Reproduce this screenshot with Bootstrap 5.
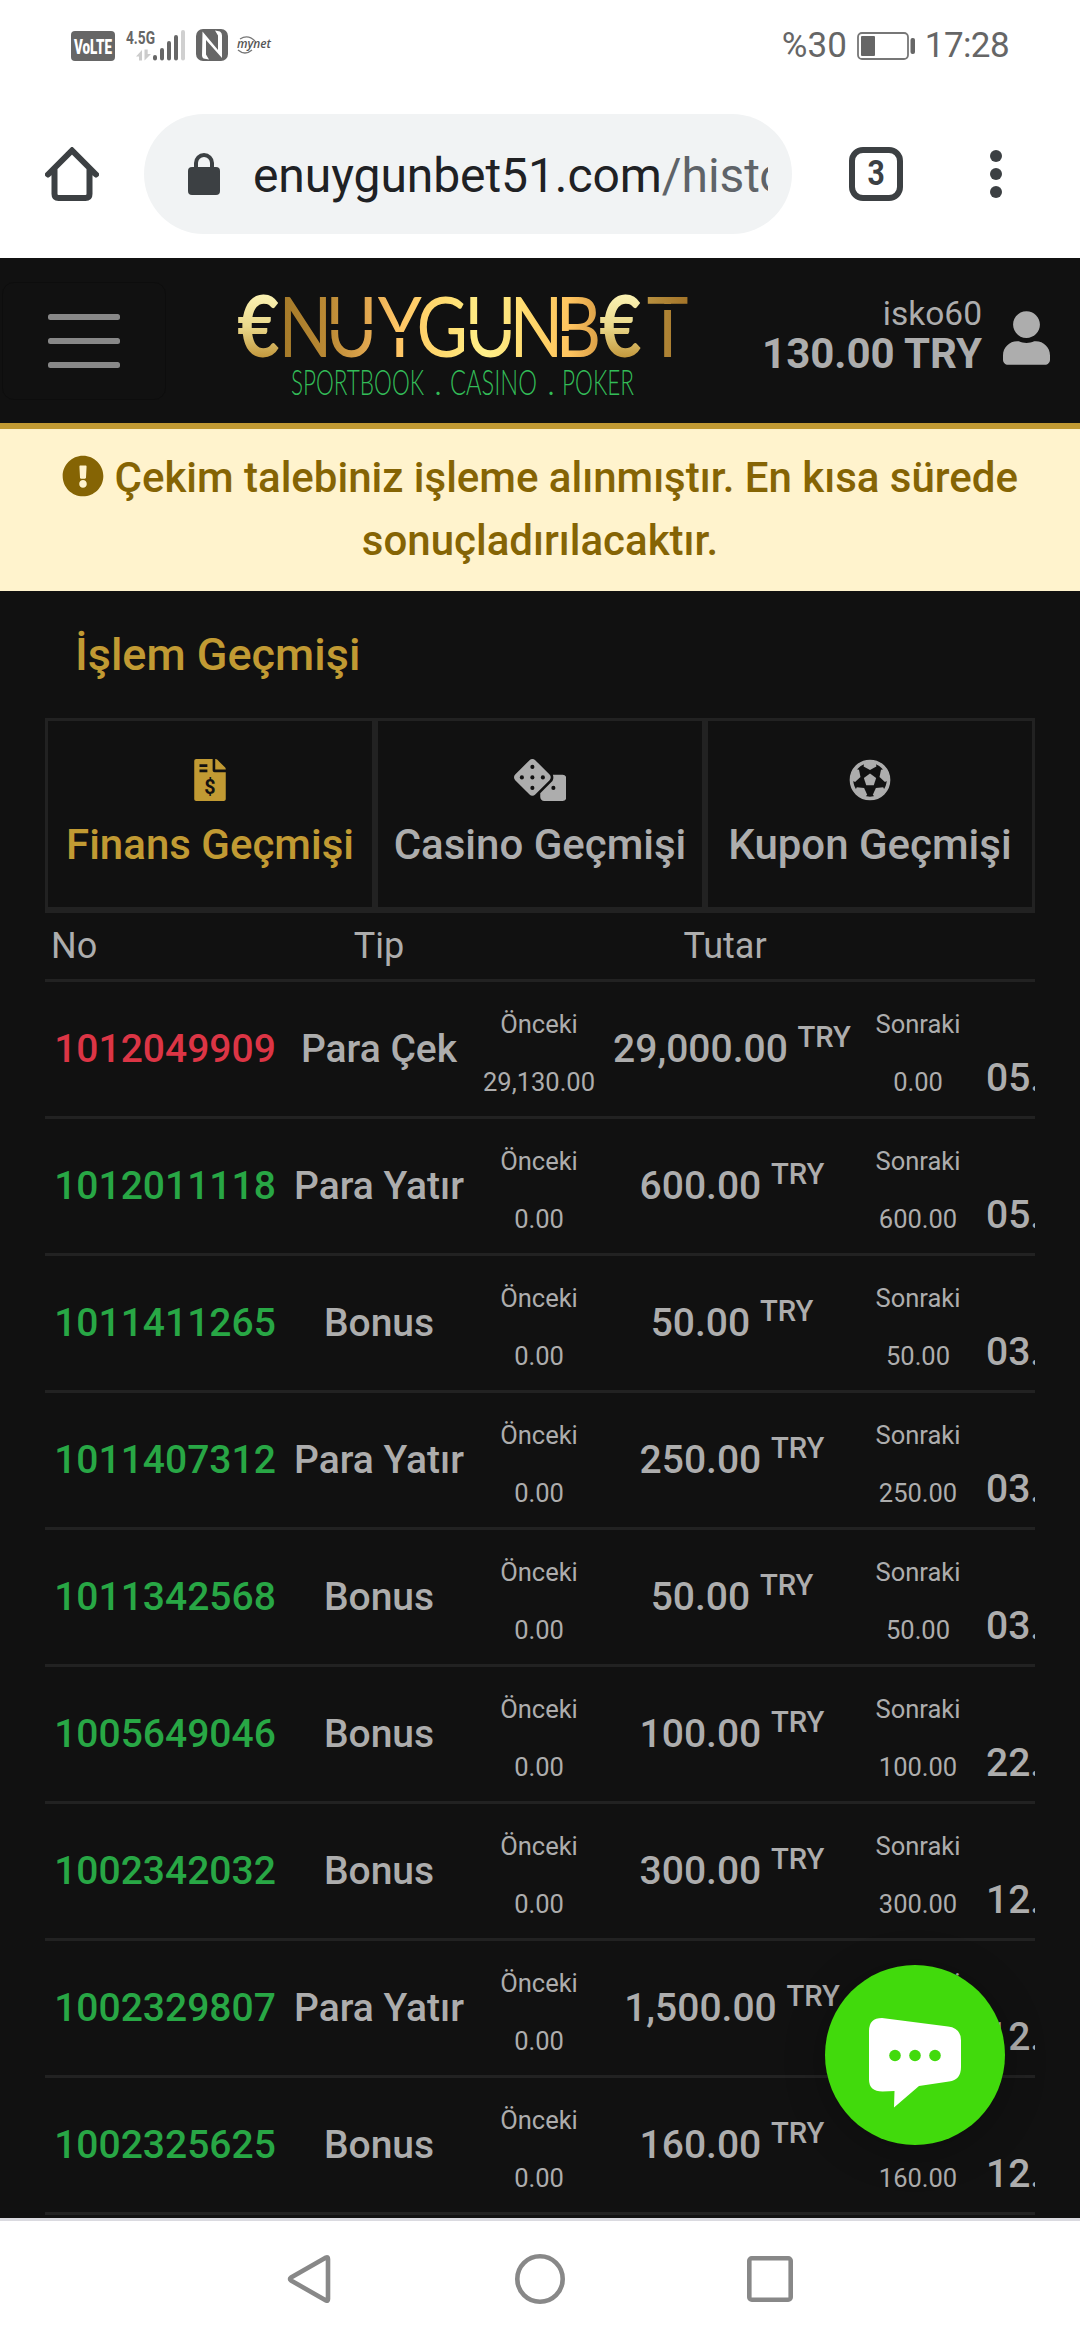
<!DOCTYPE html>
<html lang="tr">
<head>
<meta charset="utf-8">
<meta name="viewport" content="width=device-width, initial-scale=1">
<title>İşlem Geçmişi</title>
<link href="https://cdn.jsdelivr.net/npm/bootstrap@5.3.0/dist/css/bootstrap.min.css" rel="stylesheet">
<style>
body{width:1080px;height:2340px;overflow:hidden;background:#fff;font-family:Roboto,"Noto Sans",sans-serif;color:#adadad}
svg{display:block;flex:none}
.status-bar{height:92px;padding:0 71px 0 71px;color:#666;font-size:35px}
.battery{margin:0 9px}
.url-bar{height:166px;padding:22px 0 24px;color:#3c4043}
.omnibox{width:648px;height:120px;margin-left:45px;border-radius:60px;background:#f1f3f4;padding:0 24px 0 44px;font-size:48px}
.omnibox-url{width:515px;margin-left:33px;padding-top:3px;white-space:nowrap;overflow:hidden;color:#202124;line-height:70px;letter-spacing:-.08px}
.omnibox-url span{color:#5f6368}
.tab-count{width:54px;height:54px;border:6px solid #3c4043;border-radius:14px;margin-left:57px;font:700 35px/42px "Roboto",sans-serif}
.tab-count span{display:inline-block;transform:scaleX(.86)}
.site{background:#111;height:1960px}
.site-head{height:171px;padding:0;border-bottom:6px solid #c19a33}
.menu-btn{width:164px;height:118px;margin:24px 0 24px 2px;padding:0;border:1px solid #0d0d0d;border-radius:12px}
.user-name{font-size:33.500px;line-height:40px}
.user-sum{font-size:42px;line-height:40px;font-weight:700}
.notice{height:162px;padding:17px 45px 19px;background:#fff3cd;color:#856404;font-size:42px;font-weight:500;line-height:63px;border:0;border-radius:0;margin:0}
.notice svg{display:inline-block;vertical-align:-5px}
.page-title{height:127px;padding:33px 0 0 75px;font-size:45px;line-height:62px;font-weight:500;color:#c19a33;margin:0}
.hist-tabs{margin:0 45px;border-bottom:3px solid #222}
.hist-tabs .nav-link{width:330px;height:192px;padding:38px 0 0;border:3px solid #222;border-radius:0;color:#adadad;font-size:42px;line-height:63px;font-weight:500;white-space:nowrap}
.hist-tabs .nav-link.active{color:#c19a33;background:none}
.hist-tabs svg{margin-bottom:12px}
.hist-wrap{margin:0 45px;width:990px;overflow:hidden;height:1305px}
.hist{--bs-table-bg:transparent;--bs-table-color:#adadad;width:1250px;table-layout:fixed;margin:0;color:#adadad;border-collapse:separate;border-spacing:0}
.hist>:not(caption)>*>*{padding:0;border:0;border-bottom:3px solid #222;vertical-align:middle;text-align:center;white-space:nowrap}
.hist th{height:69px;font-size:36px;font-weight:400;line-height:54px}
.hist>thead>tr>th:first-child{text-align:left;padding-left:6px}
.hist td{height:137px;font-size:39px;font-weight:500;line-height:58px}
.hist>tbody>tr>.side{font-size:25.500px;font-weight:400;padding-top:8px}
.hist>tbody>tr>.when{text-align:left;padding-left:9px}
.hist>tbody>tr>.in{color:#28a745}
.hist>tbody>tr>.out{color:#dc3545}
.hist sup{line-height:0}
.chat-fab{position:absolute;left:825px;top:1965px;width:180px;height:180px;border-radius:50%;background:#41da0c;box-shadow:0 6px 40px rgba(0,0,0,.25)}
.phone-nav{height:122px;border-top:3px solid #dadae0;background:#fff;padding:0 287px 4px}
</style>
</head>
<body class="d-flex flex-column position-relative">

<div class="status-bar d-flex align-items-center justify-content-between">
  <svg width="206" height="40" viewBox="71 26 206 40">
    <rect x="71" y="31" width="44" height="30" rx="4" fill="#666"/>
    <text x="74" y="53.500" font-family="Roboto" font-weight="900" font-size="20" fill="#fff" textLength="38" lengthAdjust="spacingAndGlyphs">VoLTE</text>
    <text x="126" y="43.500" font-family="Roboto" font-weight="700" font-size="19" fill="#666" textLength="29" lengthAdjust="spacingAndGlyphs">4.5G</text>
    <path d="M136 56.500 142 50V60.500H139V56.500zM144.500 49.500h3.200V54H151l-6.500 6.500z" fill="#ccc"/>
    <g stroke="#666" stroke-width="4" stroke-linecap="round"><path d="M155 57v1.500M162 50v8.500M169 43v15.500M176 37v21.500"/><path stroke="#d0d0d0" d="M183 32v26.500"/></g>
    <rect x="196" y="29" width="32" height="32" rx="7" fill="#666"/>
    <path d="M202.500 31.500 218 50V35.500l-3-5 5 1q2 1.500 2 4V58L206 40V54.500l3 5-5.500-1q-1.500-1-1.500-3z" fill="#fff"/>
    <path d="M240 39q8-5 15 2M238 50q7 6 14 0" fill="none" stroke="#777" stroke-width="1.300"/>
    <text x="237" y="48" font-family="Open Sans" font-style="italic" font-weight="600" font-size="13" fill="#555" textLength="34" lengthAdjust="spacingAndGlyphs">mynet</text>
  </svg>
  <div class="d-flex align-items-center">
    <span>%30</span>
    <svg class="battery" width="60" height="30" viewBox="857 31 60 30"><rect x="859" y="33" width="50" height="26" rx="4" fill="none" stroke="#777" stroke-width="1.800"/><rect x="862" y="36" width="14" height="20" rx="1" fill="#666"/><rect x="911.500" y="38" width="4.500" height="16" rx="2" fill="#666"/></svg>
    <span style="letter-spacing:-.6px">17:28</span>
  </div>
</div>

<div class="url-bar d-flex align-items-center">
  <svg style="margin-left:45px" width="54" height="54" viewBox="0 0 54 54"><path d="M3 27.500 27 3.500l24 24M9.500 22v25q0 4 4 4h27q4 0 4-4V22" fill="none" stroke="#3c4043" stroke-width="6" stroke-linecap="round"/></svg>
  <div class="omnibox d-flex align-items-center">
    <svg width="32" height="42" viewBox="0 0 32 42"><rect y="14" width="32" height="28" rx="4" fill="#3c4043"/><path d="M8 16v-6a8 8 0 0 1 16 0v6" fill="none" stroke="#3c4043" stroke-width="4"/></svg>
    <div class="omnibox-url">enuygunbet51.com<span>/histo</span></div>
  </div>
  <div class="tab-count text-center"><span>3</span></div>
  <svg style="margin-left:87px" width="12" height="50" viewBox="0 0 12 50"><g fill="#3c4043"><circle cx="6" cy="7" r="6"/><circle cx="6" cy="25" r="6"/><circle cx="6" cy="43" r="6"/></g></svg>
</div>

<main class="site">
  <nav class="navbar site-head d-flex flex-nowrap align-items-start justify-content-start">
    <button class="menu-btn navbar-toggler d-flex justify-content-center align-items-center" type="button" aria-label="Menu">
      <svg width="72" height="54" viewBox="0 0 72 54"><g fill="#888"><rect width="72" height="6" rx="2.500"/><rect y="24" width="72" height="6" rx="2.500"/><rect y="48" width="72" height="6" rx="2.500"/></g></svg>
    </button>
    <svg style="margin:28px 0 0 70px" width="454" height="120" viewBox="236 286 454 120">
      <defs>
        <linearGradient id="gold" gradientUnits="userSpaceOnUse" x1="335" x2="807" y1="0" y2="0">
          <stop offset="0" stop-color="#a67b2a"/><stop offset=".11" stop-color="#bb8a35"/><stop offset=".21" stop-color="#e2a850"/><stop offset=".28" stop-color="#ffc565"/><stop offset=".4" stop-color="#ffdc70"/><stop offset=".5" stop-color="#fff08a"/><stop offset=".63" stop-color="#ffd468"/><stop offset=".71" stop-color="#ffc45f"/><stop offset=".78" stop-color="#dca148"/><stop offset=".9" stop-color="#b89140"/><stop offset="1" stop-color="#a5762a"/>
        </linearGradient>
        <linearGradient id="coin" gradientUnits="userSpaceOnUse" x1="0" x2="0" y1="294" y2="358"><stop offset="0" stop-color="#fbf2b4"/><stop offset=".5" stop-color="#ead98c"/><stop offset="1" stop-color="#c2973c"/></linearGradient>
      </defs>
      <text transform="scale(.85 1)" y="357" font-family="Lato" font-size="83" fill="url(#gold)" x="279 327.700 383 444.500 490 546.500 599.500 653.500 705 761"><tspan fill="url(#coin)" font-weight="700" font-size="86">€</tspan>NUYGUNB<tspan fill="url(#coin)" font-weight="700" font-size="86">€</tspan>T</text>
      <g fill="#111"><path d="M329 324h45v6h-45zM392 332h16v6h-16zM468 324h45v6h-45zM652 304h32v6h-32zM560 331h9.500v5H560z"/></g>
      <g font-family="Lato" font-weight="300" font-size="34.500" fill="#33bd58">
        <text x="291" y="394.500" textLength="133" lengthAdjust="spacingAndGlyphs">SPORTBOOK</text>
        <text x="434" y="394.500">.</text>
        <text x="450" y="394.500" textLength="87" lengthAdjust="spacingAndGlyphs">CASINO</text>
        <text x="547" y="394.500">.</text>
        <text x="562" y="394.500" textLength="72" lengthAdjust="spacingAndGlyphs">POKER</text>
      </g>
    </svg>
    <div class="ms-auto text-end" style="margin-top:36px">
      <div class="user-name">isko60</div>
      <div class="user-sum">130.00 TRY</div>
    </div>
    <svg style="margin:53px 30px 0 21px" width="47" height="54" viewBox="0 0 448 512"><path fill="#adadad" d="M224 256c70.700 0 128-57.300 128-128S294.700 0 224 0 96 57.300 96 128s57.300 128 128 128zm89.600 32h-16.700c-22.200 10.200-46.900 16-72.900 16s-50.600-5.800-72.900-16h-16.700C60.200 288 0 348.200 0 422.400V464c0 26.500 21.500 48 48 48h352c26.500 0 48-21.500 48-48v-41.600c0-74.200-60.200-134.400-134.400-134.400z"/></svg>
  </nav>

  <div class="alert notice text-center" role="alert"><svg width="42" height="42" viewBox="0 0 512 512"><path fill="#856404" d="M504 256c0 136.997-111.043 248-248 248S8 392.997 8 256C8 119.083 119.043 8 256 8s248 111.083 248 248zm-248 50c-25.405 0-46 20.595-46 46s20.595 46 46 46 46-20.595 46-46-20.595-46-46-46zm-43.673-165.346l7.418 136c.347 6.364 5.609 11.346 11.982 11.346h48.546c6.373 0 11.635-4.982 11.982-11.346l7.418-136c.375-6.874-5.098-12.654-11.982-12.654h-63.383c-6.884 0-12.356 5.780-11.981 12.654z"/></svg> Çekim talebiniz işleme alınmıştır. En kısa sürede<br>sonuçladırılacaktır.</div>

  <h1 class="page-title">İşlem Geçmişi</h1>

  <div class="nav hist-tabs flex-nowrap">
    <a class="nav-link active d-flex flex-column align-items-center">
      <svg width="32" height="42" viewBox="0 0 384 512"><path fill="#c19a33" d="M377 105L279.100 7c-4.500-4.500-10.600-7-17-7H256v128h128v-6.100c0-6.300-2.500-12.400-7-16.900zM224 136V0H24C10.700 0 0 10.700 0 24v464c0 13.300 10.700 24 24 24h336c13.300 0 24-10.700 24-24V160H248c-13.200 0-24-10.800-24-24z"/><path fill="#111" d="M64 64h96v32H64zM64 128h96v32H64z"/><text x="192" y="424" text-anchor="middle" font-family="Roboto" font-weight="700" font-size="240" fill="#111">$</text></svg>
      <span>Finans Geçmişi</span></a>
    <a class="nav-link d-flex flex-column align-items-center">
      <svg width="52.500" height="42" viewBox="0 0 640 512"><path fill="#adadad" d="M592 192H473.260c12.690 29.590 7.120 65.200-17 89.320L320 417.580V464c0 26.510 21.490 48 48 48h224c26.510 0 48-21.490 48-48V240c0-26.510-21.490-48-48-48zM433.630 189.300L258.700 14.370c-19.160-19.160-50.230-19.160-69.390 0L14.370 189.300c-19.160 19.160-19.160 50.230 0 69.390L189.300 433.630c19.160 19.160 50.230 19.160 69.390 0L433.630 258.700c19.160-19.170 19.160-50.240 0-69.400z"/><g fill="#111"><circle cx="480" cy="352" r="25"/><circle cx="96" cy="224" r="25"/><circle cx="224" cy="96" r="25"/><circle cx="224" cy="224" r="25"/><circle cx="224" cy="352" r="25"/><circle cx="352" cy="224" r="25"/></g></svg>
      <span>Casino Geçmişi</span></a>
    <a class="nav-link d-flex flex-column align-items-center">
      <svg width="42" height="42" viewBox="-256 -256 512 512"><circle r="226" fill="none" stroke="#adadad" stroke-width="44"/><g fill="#adadad"><path d="M0-78 75-24 46 64H-46L-75-24z"/><path id="patch" d="M-68-232 -78-166 0-122 78-166 68-232z"/><use href="#patch" transform="rotate(72)"/><use href="#patch" transform="rotate(144)"/><use href="#patch" transform="rotate(216)"/><use href="#patch" transform="rotate(288)"/></g></svg>
      <span>Kupon Geçmişi</span></a>
  </div>

  <div class="hist-wrap">
    <table class="table hist">
      <colgroup><col style="width:240px"><col style="width:188px"><col style="width:132px"><col style="width:254px"><col style="width:118px"><col></colgroup>
      <thead><tr><th>No</th><th>Tip</th><th colspan="3">Tutar</th><th></th></tr></thead>
      <tbody>
        <tr><td class="out">1012049909</td><td>Para Çek</td><td class="side">Önceki<br>29,130.00</td><td>29,000.00 <sup>TRY</sup></td><td class="side">Sonraki<br>0.00</td><td class="when">&nbsp;<br>05.</td></tr>
        <tr><td class="in">1012011118</td><td>Para Yatır</td><td class="side">Önceki<br>0.00</td><td>600.00 <sup>TRY</sup></td><td class="side">Sonraki<br>600.00</td><td class="when">&nbsp;<br>05.</td></tr>
        <tr><td class="in">1011411265</td><td>Bonus</td><td class="side">Önceki<br>0.00</td><td>50.00 <sup>TRY</sup></td><td class="side">Sonraki<br>50.00</td><td class="when">&nbsp;<br>03.</td></tr>
        <tr><td class="in">1011407312</td><td>Para Yatır</td><td class="side">Önceki<br>0.00</td><td>250.00 <sup>TRY</sup></td><td class="side">Sonraki<br>250.00</td><td class="when">&nbsp;<br>03.</td></tr>
        <tr><td class="in">1011342568</td><td>Bonus</td><td class="side">Önceki<br>0.00</td><td>50.00 <sup>TRY</sup></td><td class="side">Sonraki<br>50.00</td><td class="when">&nbsp;<br>03.</td></tr>
        <tr><td class="in">1005649046</td><td>Bonus</td><td class="side">Önceki<br>0.00</td><td>100.00 <sup>TRY</sup></td><td class="side">Sonraki<br>100.00</td><td class="when">&nbsp;<br>22.</td></tr>
        <tr><td class="in">1002342032</td><td>Bonus</td><td class="side">Önceki<br>0.00</td><td>300.00 <sup>TRY</sup></td><td class="side">Sonraki<br>300.00</td><td class="when">&nbsp;<br>12.</td></tr>
        <tr><td class="in">1002329807</td><td>Para Yatır</td><td class="side">Önceki<br>0.00</td><td>1,500.00 <sup>TRY</sup></td><td class="side">Sonraki<br>&nbsp;</td><td class="when">&nbsp;<br>12.</td></tr>
        <tr><td class="in">1002325625</td><td>Bonus</td><td class="side">Önceki<br>0.00</td><td>160.00 <sup>TRY</sup></td><td class="side">&nbsp;<br>160.00</td><td class="when">&nbsp;<br>12.</td></tr>
      </tbody>
    </table>
  </div>
</main>

<div class="phone-nav d-flex align-items-center justify-content-between">
  <svg width="44" height="52" viewBox="0 0 44 52"><path d="M39 4.500Q41 3.500 41 6v40q0 2.500-2 1.500L4 27.500q-2-1.500 0-3z" fill="none" stroke="#888" stroke-width="4.600" stroke-linejoin="round"/></svg>
  <svg width="52" height="52" viewBox="0 0 52 52"><circle cx="27" cy="26" r="22.700" fill="none" stroke="#888" stroke-width="4.600"/></svg>
  <svg width="46" height="46" viewBox="0 0 46 46"><rect x="2.300" y="2.300" width="41.400" height="41.400" rx="2.500" fill="none" stroke="#888" stroke-width="4.600"/></svg>
</div>

<div class="chat-fab">
  <svg width="180" height="180" viewBox="825 1965 180 180"><path fill="#fff" d="M869 2031q0-13 13-13l66 8.500q13 1.500 13 14V2067q0 13-12 14.500l-30 4.500-25 21.500.500-16.500-12 .5q-13.500 0-13.500-12z"/><g fill="#41da0c"><circle cx="895" cy="2055.500" r="5.800"/><circle cx="915" cy="2055.500" r="5.800"/><circle cx="935" cy="2055.500" r="5.800"/></g></svg>
</div>
<script src="https://cdn.jsdelivr.net/npm/bootstrap@5.3.0/dist/js/bootstrap.bundle.min.js"></script>
</body>
</html>
